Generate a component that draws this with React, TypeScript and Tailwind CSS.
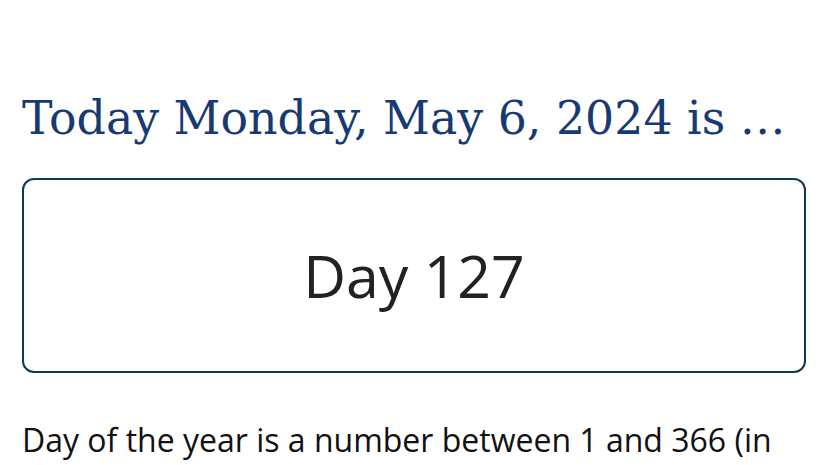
import React from 'react';

export default function App() {
    return (
        <div className="min-h-screen bg-white px-[22px] pt-[84px]" style={{ fontFamily: '"Open Sans", sans-serif' }}>
            {/* Heading */}
            <h1
                className="text-[#183a72] text-[45.8px] leading-[68px] font-normal whitespace-nowrap"
                style={{ fontFamily: '"DejaVu Serif", serif' }}
            >
                Today Monday, May 6, 2024 is …
            </h1>

            {/* Result box */}
            <div className="mt-[26px] h-[195px] w-[784px] rounded-[12px] border-2 border-[#0e3a56] flex items-center justify-center">
                <span className="text-[59px] text-[#222] leading-none">Day 127</span>
            </div>

            {/* Description */}
            <p className="mt-[46px] text-[32px] text-[#111] leading-[42px] whitespace-nowrap">
                Day of the year is a number between 1 and 366 (in
            </p>
        </div>
    );
}
